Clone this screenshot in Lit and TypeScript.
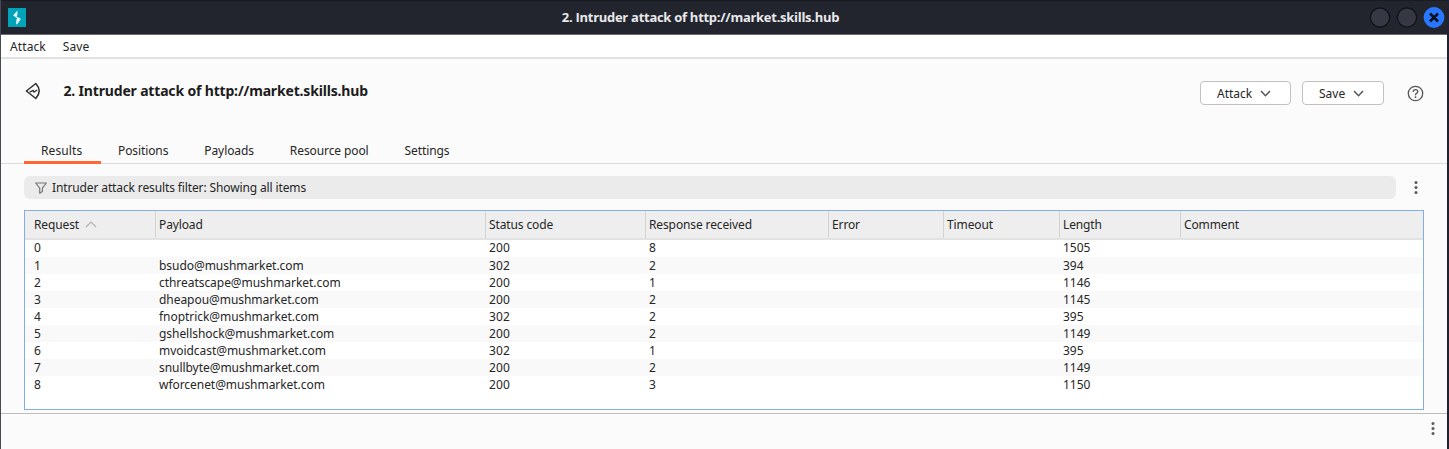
import { LitElement, html, css, svg } from "lit";
import { customElement } from "lit/decorators.js";
import { classMap } from "lit/directives/class-map.js";

const TABS = ["Results", "Positions", "Payloads", "Resource pool", "Settings"];
const COLUMNS = ["Request", "Payload", "Status code", "Response received", "Error", "Timeout", "Length", "Comment"];
const ROWS: string[][] = [
  ["0", "", "200", "8", "", "", "1505", ""],
  ["1", "bsudo@mushmarket.com", "302", "2", "", "", "394", ""],
  ["2", "cthreatscape@mushmarket.com", "200", "1", "", "", "1146", ""],
  ["3", "dheapou@mushmarket.com", "200", "2", "", "", "1145", ""],
  ["4", "fnoptrick@mushmarket.com", "302", "2", "", "", "395", ""],
  ["5", "gshellshock@mushmarket.com", "200", "2", "", "", "1149", ""],
  ["6", "mvoidcast@mushmarket.com", "302", "1", "", "", "395", ""],
  ["7", "snullbyte@mushmarket.com", "200", "2", "", "", "1149", ""],
  ["8", "wforcenet@mushmarket.com", "200", "3", "", "", "1150", ""],
];

const dots = html`<svg class="dots" width="6" height="16" viewBox="0 0 6 16" fill="#5a5a5a">
  ${[2.5, 7.5, 12.5].map((y) => svg`<circle cx="3" cy=${y} r="1.5"></circle>`)}
</svg>`;

@customElement("app-root")
export class AppRoot extends LitElement {
  static styles = css`
    :host {
      display: block;
      font-family: "Noto Sans", "Open Sans", sans-serif;
      font-size: 12px;
      color: #262626;
    }
    svg { display: block; flex: none; }
    .window {
      box-sizing: border-box;
      width: 1449px;
      height: 449px;
      display: flex;
      flex-direction: column;
      background: #fbfbfb;
      border-left: 1px solid #474a52;
      border-right: 2px solid #20232d;
      overflow: hidden;
      white-space: nowrap;
    }
    .titlebar {
      box-sizing: border-box;
      height: 35px;
      flex: none;
      display: grid;
      grid-template-columns: 24px 1fr 78px;
      align-items: center;
      margin: 0 -2px 0 -1px;
      padding: 0 2px 0 8px;
      background: #23252e;
      border-top: 1px solid #191b23;
      border-bottom: 1px solid #6a6b71;
    }
    .caption {
      padding-bottom: 2px;
      font-family: "Open Sans", "Noto Sans", sans-serif;
      font-size: 13px;
      font-weight: 700;
      letter-spacing: -0.28px;
      color: #e9e9ec;
      text-align: center;
    }
    .controls { display: flex; gap: 5px; }
    .menubar {
      box-sizing: border-box;
      height: 24px;
      flex: none;
      display: flex;
      gap: 17px;
      padding-left: 9px;
      line-height: 23px;
      letter-spacing: 0.1px;
      background: #fff;
      border-bottom: 2px solid #e2e2e2;
    }
    .head {
      box-sizing: border-box;
      height: 70px;
      flex: none;
      display: flex;
      align-items: center;
      padding: 0 23px 2px 24px;
    }
    .title {
      flex: 1;
      padding: 0 0 5px 21.5px;
      font-size: 14px;
      font-weight: 700;
      letter-spacing: -0.17px;
      color: #1c1c1c;
    }
    .mark { margin-bottom: 5px; }
    .button {
      box-sizing: border-box;
      height: 24px;
      display: flex;
      align-items: center;
      gap: 8px;
      padding: 0 19px 0 16px;
      margin-right: 11px;
      background: #fff;
      border: 1px solid #c4c0c0;
      border-radius: 4px;
    }
    .attack { width: 91px; }
    .save { width: 82px; margin-right: 23px; }
    .tabs {
      height: 34px;
      flex: none;
      display: flex;
      padding-left: 23px;
      border-bottom: 1px solid #dadcdc;
      letter-spacing: -0.1px;
    }
    .tab {
      box-sizing: border-box;
      height: 35px;
      padding: 10px 19px 0 17px;
      line-height: 24px;
    }
    .tab.active { width: 77px; border-bottom: 3px solid #ff6633; letter-spacing: 0.1px; }
    .tools {
      flex: none;
      display: flex;
      align-items: center;
      gap: 17px;
      padding: 12px 0 11px 23px;
    }
    .filter {
      box-sizing: border-box;
      width: 1372px;
      height: 23px;
      display: flex;
      align-items: center;
      gap: 5px;
      padding-left: 11px;
      background: #ebebeb;
      border-radius: 6px;
      letter-spacing: -0.125px;
    }
    .table {
      box-sizing: border-box;
      width: 1400px;
      height: 200px;
      flex: none;
      margin-left: 23px;
      background: #fff;
      border: 1px solid #84afdc;
    }
    .row {
      display: grid;
      grid-template-columns: 130px 330px 160px 183px 115px 116px 121px 1fr;
    }
    .cell { padding-left: 4px; }
    .cell:first-child { padding-left: 9px; }
    .columns {
      box-sizing: border-box;
      height: 29px;
      line-height: 28px;
      background: #eeeeee;
      border-bottom: 2px solid #e2e2e2;
      letter-spacing: -0.12px;
    }
    .columns .cell {
      box-sizing: border-box;
      height: 27px;
      display: flex;
      align-items: center;
      gap: 6px;
      padding-left: 3px;
      border-left: 1px solid #d3d3d3;
    }
    .columns .cell:first-child { border-left: 0; padding-left: 9px; }
    .data { line-height: 17px; height: 17px; letter-spacing: -0.05px; }
    .data:nth-child(2) { line-height: 16px; }
    .data .cell:not(:nth-child(2)) { letter-spacing: 0.15px; }
    .data .cell:nth-child(7) { letter-spacing: 0; }
    .data.odd { background: #f9f9f9; }
    .status {
      flex: 1;
      display: flex;
      justify-content: flex-end;
      margin-top: 3px;
      padding: 7px 11px 0 0;
      border-top: 1px solid #bdbdbd;
    }
  `;

  private chevron() {
    return html`<svg width="11" height="7" viewBox="0 0 11 7" fill="none" stroke="#555" stroke-width="1.5">
      <path d="M1 1l4.5 4.7L10 1"></path>
    </svg>`;
  }

  private disc(close = false) {
    return html`<svg width="22" height="22" viewBox="0 0 22 22">
      <circle cx="11" cy="10.5" r=${close ? 10.4 : 9.6} fill=${close ? "#2777ff" : "#363943"} stroke=${close ? "none" : "#0f1116"} stroke-width="1.2"></circle>
      ${close ? svg`<path d="M7 6.5l8 8M15 6.5l-8 8" stroke="#0b1020" stroke-width="2.5"></path>` : null}
    </svg>`;
  }

  render() {
    return html`<div class="window">
      <div class="titlebar">
        <svg width="18" height="19" viewBox="0 0 18 19">
          <rect width="18" height="19" fill="#00a3b8"></rect>
          <path d="M9.4 2.6v4.6l-1 1.4 4.6 2.2-4 5.6-.9-.3.3-4.5.9-1.4L5.1 7.6z" fill="#e8f8fa"></path>
        </svg>
        <div class="caption">2. Intruder attack of http://market.skills.hub</div>
        <div class="controls">${this.disc()}${this.disc()}${this.disc(true)}</div>
      </div>
      <div class="menubar"><span>Attack</span><span>Save</span></div>
      <div class="head">
        <svg class="mark" width="17" height="18" viewBox="0 0 17 18" fill="none" stroke="#303030" stroke-width="1.5" stroke-linejoin="round" stroke-linecap="round">
          <path d="M1.4 9L10.8 1.5Q17.6 9 10.8 16.5z"></path>
          <path d="M5.2 9.9l3-1.5.6 1.7 3-1.9" stroke-width="1.3"></path>
        </svg>
        <div class="title">2. Intruder attack of http://market.skills.hub</div>
        <div class="button attack">Attack ${this.chevron()}</div>
        <div class="button save">Save ${this.chevron()}</div>
        <svg width="17" height="17" viewBox="0 0 17 17" fill="none" stroke="#555" stroke-width="1.3">
          <circle cx="8.5" cy="8.5" r="7.2"></circle>
          <path d="M6.2 6.9Q6.2 4.7 8.5 4.7T10.8 6.7Q10.8 7.7 9.5 8.4T8.5 10.3"></path>
          <circle cx="8.5" cy="12.2" r=".9" fill="#555" stroke="none"></circle>
        </svg>
      </div>
      <div class="tabs">
        ${TABS.map((t, i) => html`<div class=${classMap({ tab: true, active: i === 0 })}>${t}</div>`)}
      </div>
      <div class="tools">
        <div class="filter">
          <svg width="12" height="12" viewBox="0 0 12 12" fill="none" stroke="#777" stroke-width="1.2" stroke-linejoin="round">
            <path d="M.7 1h10.6L7.4 6.2v3.3L4.7 11.2v-5z"></path>
          </svg>
          <span>Intruder attack results filter: Showing all items</span>
        </div>
        ${dots}
      </div>
      <div class="table">
        <div class="row columns">
          ${COLUMNS.map((c, i) => html`<div class="cell">${c}${i === 0
            ? html`<svg width="12" height="7" viewBox="0 0 12 7" fill="none" stroke="#b2b2b2" stroke-width="1.2"><path d="M1 6l5-5 5 5"></path></svg>`
            : null}</div>`)}
        </div>
        ${ROWS.map((r, i) => html`<div class=${classMap({ row: true, data: true, odd: i % 2 === 1 })}>
          ${r.map((v) => html`<div class="cell">${v}</div>`)}
        </div>`)}
      </div>
      <div class="status">${dots}</div>
    </div>`;
  }
}
